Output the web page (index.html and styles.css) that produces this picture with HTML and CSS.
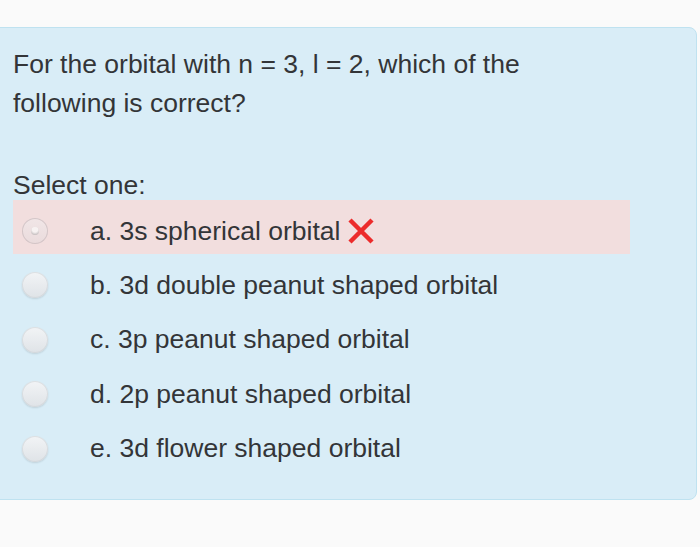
FILE: index.html
```html
<!DOCTYPE html>
<html>
<head>
<meta charset="utf-8">
<link rel="stylesheet" href="styles.css">
</head>
<body>
<div class="panel">
  <p class="question">For the orbital with n = 3, l = 2, which of the following is correct?</p>
  <div class="prompt">Select one:</div>
  <div class="answers">
    <div class="opt wrong">
      <span class="radio checked"></span>
      <span class="label">a. 3s spherical orbital</span>
      <svg class="cross" width="30" height="28" viewBox="0 0 30 28"><path d="M4 3 L26 25 M26 3 L4 25" stroke="#ec2b2b" stroke-width="4.5" stroke-linecap="butt"/></svg>
    </div>
    <div class="opt"><span class="radio"></span><span class="label">b. 3d double peanut shaped orbital</span></div>
    <div class="opt"><span class="radio"></span><span class="label">c. 3p peanut shaped orbital</span></div>
    <div class="opt"><span class="radio"></span><span class="label">d. 2p peanut shaped orbital</span></div>
    <div class="opt"><span class="radio"></span><span class="label">e. 3d flower shaped orbital</span></div>
  </div>
</div>
</body>
</html>
```
FILE: styles.css
```css
html, body { margin: 0; padding: 0; }
body {
  background: #fafafa;
  font-family: "Liberation Sans", Arial, sans-serif;
  color: #333538;
  width: 700px;
  height: 547px;
  overflow: hidden;
}
.panel {
  margin: 27px 3px 0 -10px;
  background: #d9edf7;
  border: 1px solid #bfe2f0;
  border-radius: 8px;
  height: 473px;
  box-sizing: border-box;
  padding: 17px 0 0 22px;
}
.question {
  margin: 0;
  font-size: 26.5px;
  line-height: 39px;
  width: 560px;
}
.prompt {
  margin-top: 47px;
  font-size: 26.5px;
  line-height: 30px;
}
.opt {
  display: flex;
  align-items: center;
  height: 54.5px;
  width: 617px;
  box-sizing: border-box;
  padding: 8px 0 0 9px;
}
.opt.wrong { background: #f2dede; height: 54px; }
.radio {
  width: 26px;
  height: 26px;
  border-radius: 50%;
  background: linear-gradient(#f2f4f6, #dfe3e7);
  box-shadow: 0 1px 2px rgba(0,0,0,0.12), inset 0 0 0 1px rgba(200,205,210,0.5);
  flex: none;
  position: relative;
}
.radio.checked {
  background: linear-gradient(#f1e6e7, #eadbdc);
  box-shadow: inset 0 0 0 1px rgba(205,190,192,0.8);
}
.radio.checked::after {
  content: "";
  position: absolute;
  left: 9px; top: 9px;
  width: 8px; height: 8px;
  border-radius: 50%;
  background: radial-gradient(circle at 50% 30%, #f7f2f2 40%, #a9a2a4 100%);
}
.label {
  margin-left: 42px;
  font-size: 26.5px;
}
.cross { margin-left: 6px; }
```
